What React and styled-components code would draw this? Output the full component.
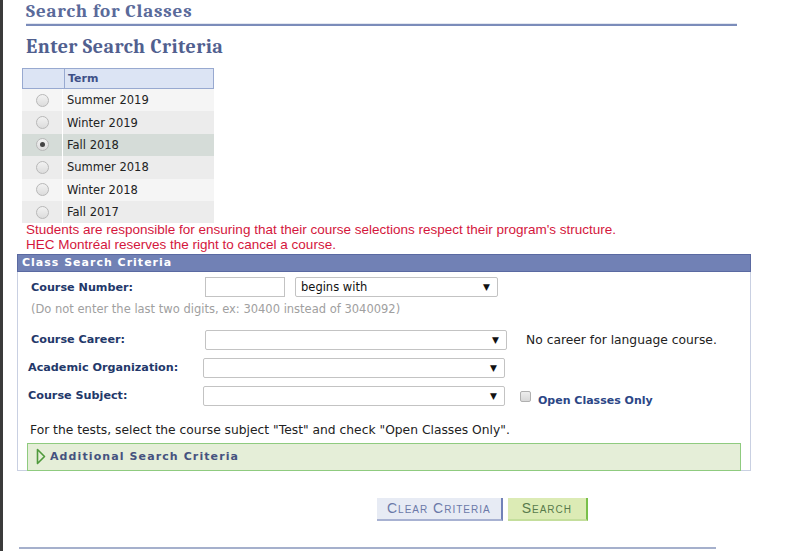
import React from "react";
import styled, { createGlobalStyle } from "styled-components";

const GlobalStyle = createGlobalStyle`
  body {
    margin: 0;
    background: #fff;
    font-family: "DejaVu Sans", Verdana, sans-serif;
  }
`;

const Page = styled.div`
  min-height: 551px;
  border-left: 3px solid #3b3b3b;
  box-sizing: border-box;
  overflow: hidden;
`;

const PageTitle = styled.h1`
  margin: 0 0 0 23px;
  width: 711px;
  height: 24px;
  line-height: 23px;
  font-family: Cambria, "Liberation Serif", serif;
  font-size: 19px;
  letter-spacing: 0.8px;
  font-weight: bold;
  color: #5a6a9a;
  border-bottom: 2px solid #7b8cba;
  box-shadow: 0 -1px 0 #e3e7f0 inset;
`;

const SubTitle = styled.h2`
  margin: 10px 0 0 23px;
  line-height: 21px;
  font-family: Cambria, "Liberation Serif", serif;
  font-size: 20px;
  letter-spacing: 0.45px;
  font-weight: bold;
  color: #51608f;
`;

const TermTable = styled.div`
  margin: 11px 0 0 19px;
  width: 192px;
`;

const TermHeader = styled.div`
  display: grid;
  grid-template-columns: 41px 1fr;
  height: 21px;
  background: #dce4f4;
  border: 1px solid #98a9d0;
  box-sizing: border-box;
  font-size: 11px;
  font-weight: bold;
  color: #3e5088;
  line-height: 19px;
`;

const HeaderCell = styled.div`
  border-left: ${(p) => (p.$first ? "none" : "1px solid #98a9d0")};
  padding-left: 3px;
`;

const TermRow = styled.div`
  display: grid;
  grid-template-columns: 41px 1fr;
  height: 22.4px;
  background: ${(p) => (p.$selected ? "#d5dcd8" : p.$odd ? "#ececec" : "#f5f5f5")};
  align-items: center;
  font-size: 11.5px;
  color: #222;
`;

const RadioCell = styled.div`
  display: flex;
  justify-content: center;
  align-items: center;
  height: 100%;
  border-right: 1px solid #fff;
`;

const Radio = styled.span`
  width: 13px;
  height: 13px;
  border-radius: 50%;
  border: 1px solid #b8b8b8;
  background: linear-gradient(#f2f2f2, #dcdcdc);
  box-sizing: border-box;
  display: flex;
  align-items: center;
  justify-content: center;
  &::after {
    content: "";
    width: 5px;
    height: 5px;
    border-radius: 50%;
    background: ${(p) => (p.$checked ? "#444" : "transparent")};
  }
`;

const TermLabel = styled.div`
  padding-left: 4px;
`;

const Warning = styled.div`
  margin: -1px 0 0 23px;
  font-family: "Liberation Sans", Arial, sans-serif;
  font-size: 13.5px;
  line-height: 15px;
  color: #d4163c;
`;

const Panel = styled.div`
  margin: 1.5px 0 0 14px;
  width: 734px;
  border: 1px solid #c9d0e2;
  border-top: none;
  box-sizing: border-box;
  height: 217px;
`;

const PanelHeader = styled.div`
  margin: 0 -1px;
  height: 18px;
  background: #7181b5;
  border: 1px solid #5a69a1;
  box-sizing: border-box;
  color: #fff;
  font-size: 11px;
  font-weight: bold;
  letter-spacing: 1px;
  line-height: 16px;
  padding-left: 4px;
`;

const PanelBody = styled.div`
  display: flex;
  flex-direction: column;
`;

const FieldRow = styled.div`
  display: flex;
  align-items: center;
  height: ${(p) => p.$h || 28}px;
  margin-top: ${(p) => p.$mt || 0}px;
  padding-left: ${(p) => p.$indent}px;
`;

const Label = styled.div`
  width: ${(p) => p.$w}px;
  font-size: 11.2px;
  font-weight: bold;
  color: #23386a;
`;

const TextInput = styled.div`
  width: 80px;
  height: 20px;
  border: 1px solid #c3c3c3;
  box-sizing: border-box;
  margin-right: 10px;
`;

const SelectBox = styled.div`
  position: relative;
  width: ${(p) => p.$w}px;
  height: 20px;
  border: 1px solid #c3c3c3;
  border-radius: 2px;
  box-sizing: border-box;
  font-size: 11.5px;
  line-height: 18px;
  padding-left: 5px;
  color: #111;
  &::after {
    content: "▼";
    position: absolute;
    right: 7px;
    top: 0;
    font-size: 9px;
    color: #111;
  }
`;

const Note = styled.div`
  margin-left: ${(p) => p.$ml || 0}px;
  font-size: ${(p) => (p.$muted ? 11.5 : 12.3)}px;
  color: ${(p) => (p.$muted ? "#a0a0a0" : "#222")};
`;

const Check = styled.span`
  width: 11px;
  height: 11px;
  border: 1px solid #b0b0b0;
  border-radius: 2px;
  background: linear-gradient(#eee, #d8d8d8);
  box-sizing: border-box;
  margin: 2px 7px 0 15px;
`;

const CheckLabel = styled.span`
  font-size: 11px;
  font-weight: bold;
  color: #2b4686;
  margin-top: 10px;
`;

const Expander = styled.div`
  display: flex;
  align-items: center;
  margin: 1px 0 0 9px;
  width: 714px;
  height: 28px;
  background: #e5eed8;
  border: 1px solid #8fcb7f;
  box-sizing: border-box;
  padding-left: 8px;
  gap: 4px;
`;

const ExpanderLabel = styled.span`
  font-size: 11px;
  font-weight: bold;
  letter-spacing: 1.1px;
  color: #45527f;
`;

const ButtonBar = styled.div`
  display: flex;
  gap: 5px;
  margin: 27px 0 0 374px;
`;

const Button = styled.div`
  height: 23px;
  padding: 0 ${(p) => p.$pad}px;
  box-sizing: border-box;
  display: flex;
  align-items: center;
  font-family: "Liberation Sans", Arial, sans-serif;
  font-size: 14px;
  font-variant: small-caps;
  letter-spacing: 1px;
  background: ${(p) => (p.$primary ? "#dcebb5" : "#e7ebf4")};
  color: ${(p) => (p.$primary ? "#587a4c" : "#6b79a8")};
  border-right: 2px solid ${(p) => (p.$primary ? "#79c04a" : "#7282b8")};
  border-bottom: 2px solid ${(p) => (p.$primary ? "#c4de9c" : "#a8b2d2")};
`;

const BottomRule = styled.div`
  margin: 26px 0 0 16px;
  width: 697px;
  height: 2px;
  background: #a5b0cc;
`;

const terms = ["Summer 2019", "Winter 2019", "Fall 2018", "Summer 2018", "Winter 2018", "Fall 2017"];

export default function App() {
  return (
    <Page>
      <GlobalStyle />
      <PageTitle>Search for Classes</PageTitle>
      <SubTitle>Enter Search Criteria</SubTitle>

      <TermTable>
        <TermHeader>
          <HeaderCell $first />
          <HeaderCell>Term</HeaderCell>
        </TermHeader>
        {terms.map((t, i) => (
          <TermRow key={t} $odd={i % 2 === 1} $selected={t === "Fall 2018"}>
            <RadioCell>
              <Radio $checked={t === "Fall 2018"} />
            </RadioCell>
            <TermLabel>{t}</TermLabel>
          </TermRow>
        ))}
      </TermTable>

      <Warning>
        Students are responsible for ensuring that their course selections respect their program's structure.
        <br />
        HEC Montréal reserves the right to cancel a course.
      </Warning>

      <Panel>
        <PanelHeader>Class Search Criteria</PanelHeader>
        <PanelBody>
          <FieldRow $indent={13} $h={31}>
            <Label $w={174}>Course Number:</Label>
            <TextInput />
            <SelectBox $w={203}>begins with</SelectBox>
          </FieldRow>
          <FieldRow $indent={13} $h={12}>
            <Note $muted>(Do not enter the last two digits, ex: 30400 instead of 3040092)</Note>
          </FieldRow>
          <FieldRow $indent={13} $h={28} $mt={11}>
            <Label $w={174}>Course Career:</Label>
            <SelectBox $w={302}>&nbsp;</SelectBox>
            <Note $ml={19}>No career for language course.</Note>
          </FieldRow>
          <FieldRow $indent={10} $h={28}>
            <Label $w={175}>Academic Organization:</Label>
            <SelectBox $w={302}>&nbsp;</SelectBox>
          </FieldRow>
          <FieldRow $indent={10} $h={28}>
            <Label $w={175}>Course Subject:</Label>
            <SelectBox $w={302}>&nbsp;</SelectBox>
            <Check />
            <CheckLabel>Open Classes Only</CheckLabel>
          </FieldRow>
          <FieldRow $indent={12} $h={24} $mt={8}>
            <Note>For the tests, select the course subject "Test" and check "Open Classes Only".</Note>
          </FieldRow>
          <Expander>
            <svg width="10" height="17" viewBox="0 0 10 17">
              <path d="M1.5 1.5 L8.5 8.5 L1.5 15.5 Z" fill="none" stroke="#4f9a3c" strokeWidth="1.6" strokeLinejoin="round" />
            </svg>
            <ExpanderLabel>Additional Search Criteria</ExpanderLabel>
          </Expander>
        </PanelBody>
      </Panel>

      <ButtonBar>
        <Button $pad={10}>Clear Criteria</Button>
        <Button $primary $pad={14}>Search</Button>
      </ButtonBar>

      <BottomRule />
    </Page>
  );
}
